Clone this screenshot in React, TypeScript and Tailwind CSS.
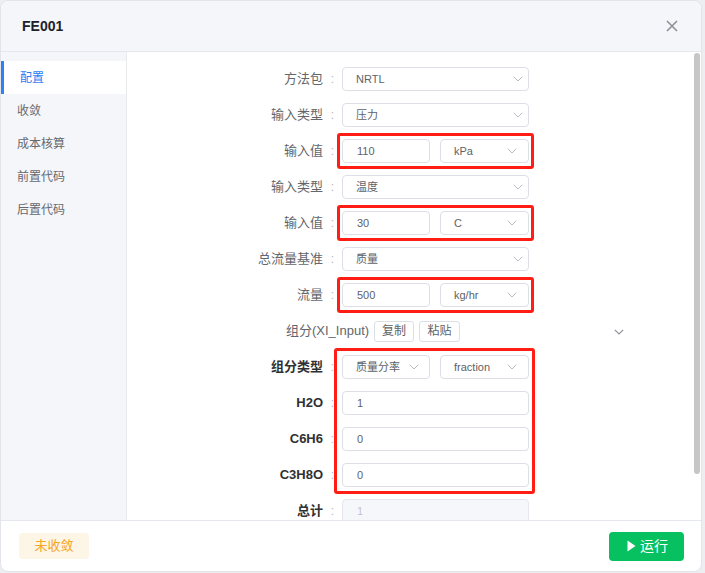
import React from "react";

const FONT = { fontFamily: '"Liberation Sans", "Noto Sans CJK SC", sans-serif' };

function Chevron() {
  return (
    <svg width="10" height="6" viewBox="0 0 10 6" fill="none">
      <path d="M0.8 0.8 L5 5 L9.2 0.8" stroke="#b9bdc5" strokeWidth="1" />
    </svg>
  );
}

function Select({ value, split = false, first = false }: { value: string; split?: boolean; first?: boolean }) {
  return (
    <div
      className={`h-[24px] rounded-[4px] border border-[#dcdfe6] bg-white flex items-center justify-between pl-[13px] text-[11px] text-[#606266] ${
        split ? (first ? "w-[88px] pr-[10px]" : "w-[89px] pr-[11px]") : "w-[187px] pr-[5px]"
      }`}
    >
      <span>{value}</span>
      <Chevron />
    </div>
  );
}

function Input({ value, split = false, disabled = false }: { value: string; split?: boolean; disabled?: boolean }) {
  return (
    <div
      className={`h-[24px] rounded-[4px] border flex items-center pl-[14px] text-[11px] ${
        split ? "w-[88px]" : "w-[187px]"
      } ${disabled ? "bg-[#f5f7fa] border-[#e4e7ed] text-[#c0c4cc]" : "bg-white border-[#dcdfe6] text-[#606266]"}`}
    >
      {value}
    </div>
  );
}

function Row({
  label,
  bold = false,
  children,
  boxed = false,
}: {
  label: string;
  bold?: boolean;
  children: React.ReactNode;
  boxed?: boolean;
}) {
  return (
    <div className="relative h-[36px] flex items-center">
      <div
        className={`w-[196px] text-right text-[13px] ${bold ? "font-bold text-[#303133]" : "text-[#63666c]"}`}
      >
        {label}
      </div>
      <div className="w-[19px] text-center text-[12px] text-[#b4b7bd]">:</div>
      <div className="flex gap-[10px]">{children}</div>
      {boxed && (
        <div className="absolute top-0 bottom-0 left-[210px] w-[197px] border-[3px] border-[#ff1d14] rounded-[3px] pointer-events-none" />
      )}
    </div>
  );
}

export default function App() {
  const menu = ["配置", "收敛", "成本核算", "前置代码", "后置代码"];
  return (
    <div className="w-[705px] h-[573px] bg-[#eceef2] overflow-hidden" style={FONT}>
      <div className="w-[702px] h-[572px] bg-white border border-[#e2e4e9] rounded-[8px] flex flex-col overflow-hidden">
        {/* header */}
        <div className="h-[51px] shrink-0 bg-[#f5f6f9] border-b border-[#e4e7ed] flex items-center justify-between pl-[21px] pr-[23px]">
          <span className="text-[14px] font-bold text-[#1d2129]">FE001</span>
          <svg width="12" height="12" viewBox="0 0 12 12" fill="none">
            <path d="M1 1 L11 11 M11 1 L1 11" stroke="#8d9096" strokeWidth="1.6" />
          </svg>
        </div>

        {/* body */}
        <div className="flex-1 min-h-0 flex">
          <div className="w-[126px] shrink-0 bg-[#f5f6fa] border-r border-[#e8eaee] pt-[9px]">
            {menu.map((m, i) => (
              <div
                key={m}
                className={`h-[33px] flex items-center pl-[16px] text-[12px] ${
                  i === 0 ? "bg-white text-[#2b7cf6] border-l-[3px] border-[#2f80f5] pl-[13px]" : "text-[#66696f]"
                }`}
              >
                {m}
              </div>
            ))}
          </div>

          <div className="flex-1 min-w-0 flex">
            <div className="flex-1 min-w-0 overflow-hidden pt-[9px]">
              <Row label="方法包">
                <Select value="NRTL" />
              </Row>
              <Row label="输入类型">
                <Select value="压力" />
              </Row>
              <Row label="输入值" boxed>
                <Input value="110" split />
                <Select value="kPa" split />
              </Row>
              <Row label="输入类型">
                <Select value="温度" />
              </Row>
              <Row label="输入值" boxed>
                <Input value="30" split />
                <Select value="C" split />
              </Row>
              <Row label="总流量基准">
                <Select value="质量" />
              </Row>
              <Row label="流量" boxed>
                <Input value="500" split />
                <Select value="kg/hr" split />
              </Row>

              <div className="h-[36px] flex items-center pl-[159px]">
                <span className="text-[13px] text-[#63666c]">组分(XI_Input)</span>
                <div className="ml-[5px] w-[40px] h-[21px] rounded-[3px] border border-[#dcdfe6] flex items-center justify-center text-[12px] text-[#606266]">
                  复制
                </div>
                <div className="ml-[5px] w-[41px] h-[21px] rounded-[3px] border border-[#dcdfe6] flex items-center justify-center text-[12px] text-[#606266]">
                  粘贴
                </div>
                <svg width="10" height="6" viewBox="0 0 10 6" fill="none" className="ml-[154px] mt-[2px]">
                  <path d="M0.8 0.8 L5 5 L9.2 0.8" stroke="#8f9298" strokeWidth="1.2" />
                </svg>
              </div>

              <div className="relative">
                <Row label="组分类型" bold>
                  <Select value="质量分率" split first />
                  <Select value="fraction" split />
                </Row>
                <Row label="H2O" bold>
                  <Input value="1" />
                </Row>
                <Row label="C6H6" bold>
                  <Input value="0" />
                </Row>
                <Row label="C3H8O" bold>
                  <Input value="0" />
                </Row>
                <div className="absolute top-[-1px] bottom-[-1px] left-[207px] w-[201px] border-[3px] border-[#ff1d14] rounded-[3px] pointer-events-none" />
              </div>
              <Row label="总计" bold>
                <Input value="1" disabled />
              </Row>
            </div>
            <div className="w-[8px] shrink-0 pt-[1px]">
              <div className="ml-[1px] w-[6px] h-[421px] rounded-full bg-[#c6c6c6]" />
            </div>
          </div>
        </div>

        {/* footer */}
        <div className="h-[51px] shrink-0 border-t border-[#e4e7ed] flex items-center justify-between pl-[18px] pr-[17px]">
          <div className="w-[70px] h-[26px] rounded-[4px] bg-[#fdf5e6] flex items-center justify-center text-[13px] text-[#f5a623]">
            未收敛
          </div>
          <div className="w-[75px] h-[29px] rounded-[4px] bg-[#07c160] flex items-center justify-center gap-[4px] pl-[2px] text-[14px] text-white">
            <svg width="9" height="12" viewBox="0 0 9 12">
              <path d="M0.5 0.5 L8.5 6 L0.5 11.5 Z" fill="white" />
            </svg>
            <span>运行</span>
          </div>
        </div>
      </div>
    </div>
  );
}
